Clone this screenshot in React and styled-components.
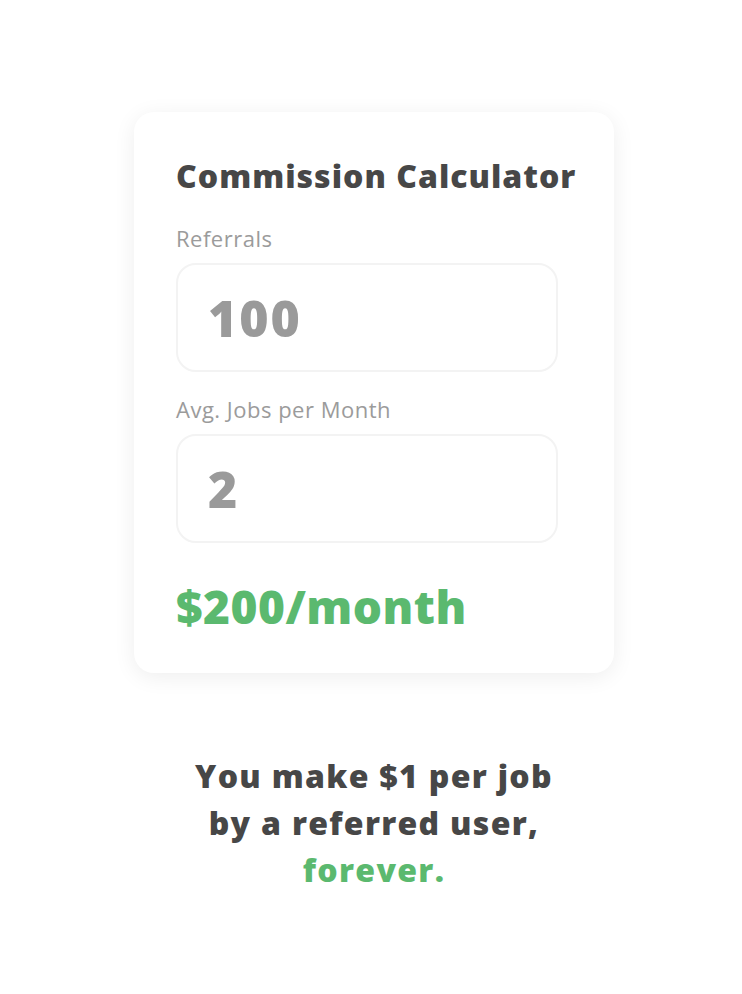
import React from 'react'
import styled, { createGlobalStyle } from 'styled-components'

const GlobalStyle = createGlobalStyle`
  body {
    margin: 0;
    background: #ffffff;
    font-family: "Open Sans", "Noto Sans", sans-serif;
  }
`

const Page = styled.div`
  display: flex;
  flex-direction: column;
  align-items: center;
  padding-top: 112px;
  padding-left: 6px;
  min-height: 994px;
  box-sizing: border-box;
`

const Card = styled.div`
  width: 480px;
  box-sizing: border-box;
  padding: 42px 42px 37px;
  background: #fff;
  border-radius: 20px;
  box-shadow: 0 4px 22px rgba(0, 0, 0, 0.07);
`

const Title = styled.h1`
  margin: 0 0 27px;
  font-size: 32px;
  line-height: 44px;
  font-weight: 800;
  letter-spacing: 1px;
  white-space: nowrap;
  color: #474747;
`

const Label = styled.div`
  font-size: 22px;
  line-height: 26px;
  letter-spacing: 0.5px;
  color: #9b9b9b;
  margin-bottom: 12px;
`

const Field = styled.div`
  width: 382px;
  height: 109px;
  box-sizing: border-box;
  border: 2px solid #f3f3f3;
  border-radius: 20px;
  display: flex;
  align-items: center;
  padding-left: 30px;
  margin-bottom: ${p => p.$gap}px;
  font-size: 50px;
  font-weight: 800;
  letter-spacing: 2px;
  color: #9a9a9a;
`

const Total = styled.div`
  font-size: 46px;
  line-height: 60px;
  font-weight: 800;
  letter-spacing: 0.5px;
  color: #5bb96f;
`

const Note = styled.p`
  margin: 79px 0 0;
  text-align: center;
  font-size: 32px;
  line-height: 47px;
  font-weight: 800;
  letter-spacing: 1.3px;
  color: #474747;
`

const Green = styled.span`
  color: #5bb96f;
`

export default function App() {
  return (
    <>
      <GlobalStyle />
      <Page>
        <Card>
          <Title>Commission Calculator</Title>
          <Label>Referrals</Label>
          <Field $gap={24}>100</Field>
          <Label>Avg. Jobs per Month</Label>
          <Field $gap={33}>2</Field>
          <Total>$200/month</Total>
        </Card>
        <Note>
          You make $1 per job
          <br />
          by a referred user,
          <br />
          <Green>forever.</Green>
        </Note>
      </Page>
    </>
  )
}
